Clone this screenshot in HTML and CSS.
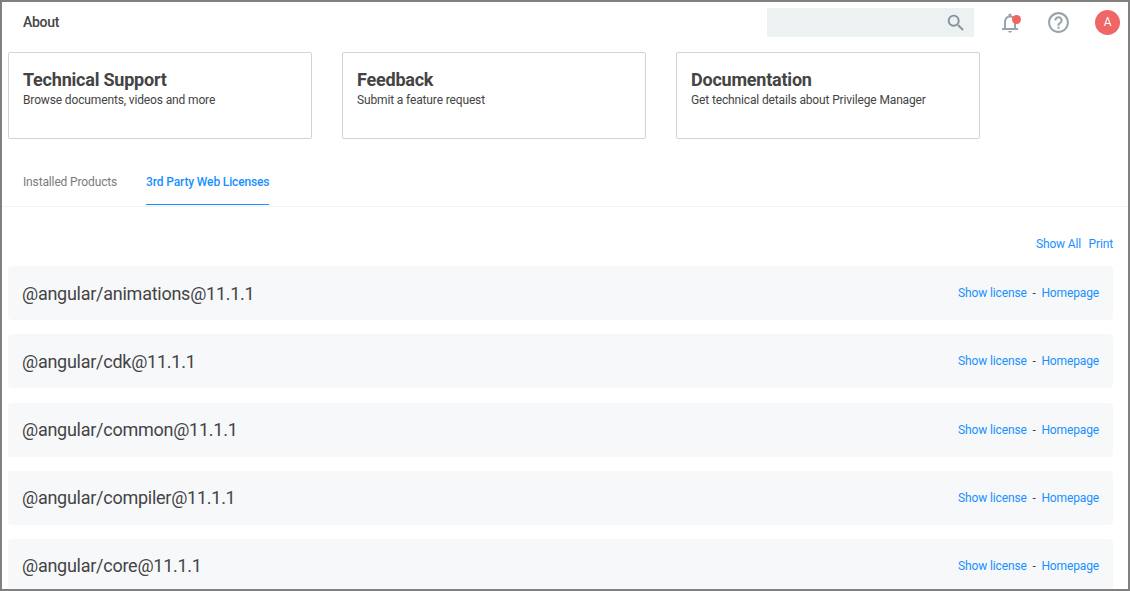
FILE: index.html
```html
<!DOCTYPE html>
<html lang="en">
<head>
<meta charset="utf-8">
<title>About</title>
<link rel="stylesheet" href="styles.css">
</head>
<body>
<div class="app">
  <header class="topbar">
    <h1 class="page-title">About</h1>
    <div class="search">
      <svg class="search-icon" viewBox="0 0 24 24"><path d="M15.5 14h-.79l-.28-.27A6.47 6.47 0 0 0 16 9.5 6.5 6.5 0 1 0 9.5 16c1.61 0 3.09-.59 4.23-1.57l.27.28v.79l5 4.99L20.49 19l-4.99-5zm-6 0C7.01 14 5 11.99 5 9.5S7.01 5 9.5 5 14 7.01 14 9.5 11.99 14 9.5 14z"/></svg>
    </div>
    <div class="bell">
      <svg class="icon" viewBox="0 0 24 24"><path d="M10.2 20h3.8c-.2 1.1-.9 1.7-1.9 1.7s-1.7-.6-1.9-1.7zM18 17v-6c0-3.07-1.63-5.64-4.5-6.32V4c0-.83-.67-1.5-1.5-1.5s-1.5.67-1.5 1.5v.68C7.64 5.36 6 7.92 6 11v6H4v2h16v-2h-2zm-2 0H8v-6c0-2.48 1.51-4.5 4-4.5s4 2.02 4 4.5v6z"/></svg>
      <span class="dot"></span>
    </div>
    <svg class="icon help" viewBox="0 0 24 24"><path d="M11 18h2v-2h-2v2zm1-16C6.48 2 2 6.48 2 12s4.48 10 10 10 10-4.48 10-10S17.52 2 12 2zm0 18c-4.41 0-8-3.59-8-8s3.59-8 8-8 8 3.59 8 8-3.59 8-8 8zm0-14c-2.21 0-4 1.79-4 4h2c0-1.1.9-2 2-2s2 .9 2 2c0 2-3 1.75-3 5h2c0-2.25 3-2.5 3-5 0-2.21-1.79-4-4-4z"/></svg>
    <div class="avatar">A</div>
  </header>
  <section class="cards">
    <div class="card"><h2>Technical Support</h2><p>Browse documents, videos and more</p></div>
    <div class="card"><h2>Feedback</h2><p>Submit a feature request</p></div>
    <div class="card"><h2>Documentation</h2><p>Get technical details about Privilege Manager</p></div>
  </section>
  <nav class="tabs">
    <a class="tab">Installed Products</a>
    <a class="tab active">3rd Party Web Licenses</a>
  </nav>
  <div class="actions"><a>Show All</a><a>Print</a></div>
  <main class="list">
    <div class="row"><span class="name">@angular/animations@11.1.1</span><span class="links"><a>Show license</a><span>-</span><a>Homepage</a></span></div>
    <div class="row"><span class="name">@angular/cdk@11.1.1</span><span class="links"><a>Show license</a><span>-</span><a>Homepage</a></span></div>
    <div class="row"><span class="name">@angular/common@11.1.1</span><span class="links"><a>Show license</a><span>-</span><a>Homepage</a></span></div>
    <div class="row"><span class="name">@angular/compiler@11.1.1</span><span class="links"><a>Show license</a><span>-</span><a>Homepage</a></span></div>
    <div class="row"><span class="name">@angular/core@11.1.1</span><span class="links"><a>Show license</a><span>-</span><a>Homepage</a></span></div>
  </main>
</div>
</body>
</html>
```

FILE: styles.css
```css
* { box-sizing: border-box; }
body { margin: 0; font-family: Roboto, sans-serif; font-size: 12px; letter-spacing: -0.14px; color: #444; background: #fff; }
h1, h2, p { margin: 0; }
.app { height: 591px; border: 2px solid #808080; overflow: hidden; }
.topbar { display: flex; align-items: center; height: 41px; padding: 0 8px 0 21px; }
.page-title { flex: 1; padding-bottom: 2px; font-size: 14px; font-weight: 500; line-height: 20px; letter-spacing: -0.3px; }
.search { display: flex; align-items: center; justify-content: flex-end; width: 207px; height: 29px; padding-right: 7px; background: #edf1f2; }
.search-icon { width: 22px; height: 22px; fill: #84929c; }
.icon { display: block; width: 24px; height: 24px; fill: #98a4ac; }
.bell { position: relative; margin-left: 24px; }
.dot { position: absolute; right: 1px; top: 4px; width: 9px; height: 9px; border-radius: 50%; background: #f26464; }
.help { margin: 0 24px 0 24px; width: 25px; height: 25px; }
.avatar { width: 25px; height: 25px; border-radius: 50%; background: #f06565; color: #fff; text-align: center; line-height: 24px; font-size: 12px; font-weight: 400; }
.cards { display: flex; gap: 30px; padding: 9px 6px 0; }
.card { width: 304px; height: 87px; padding: 17px 14px; border: 1px solid #d3d3d3; border-radius: 2px; }
.card h2 { font-size: 18px; line-height: 20px; font-weight: 700; letter-spacing: -0.22px; }
.card p { line-height: 20px; letter-spacing: -0.14px; }
.tabs { display: flex; gap: 29px; height: 68px; padding: 33px 21px 0; border-bottom: 1px solid #f3f3f3; }
.tab { height: 33px; line-height: 20px; color: #7b7b7b; }
.tab.active { color: #1890ff; font-weight: 500; border-bottom: 1px solid #1890ff; }
.actions { display: flex; justify-content: flex-end; gap: 7.5px; padding: 27px 15px 0; line-height: 20px; color: #1890ff; }
.list { display: flex; flex-direction: column; gap: 14.2px; padding: 12.2px 15px 0 6px; }
.row { display: flex; flex: none; align-items: center; justify-content: space-between; height: 54px; padding: 0 14px; border-radius: 4px; background: #f7f8fa; }
.name { padding-top: 0.8px; font-size: 18px; line-height: 24px; letter-spacing: -0.26px; }
.links { display: flex; gap: 5.8px; line-height: 20px; }
.links a { color: #1890ff; }
```
